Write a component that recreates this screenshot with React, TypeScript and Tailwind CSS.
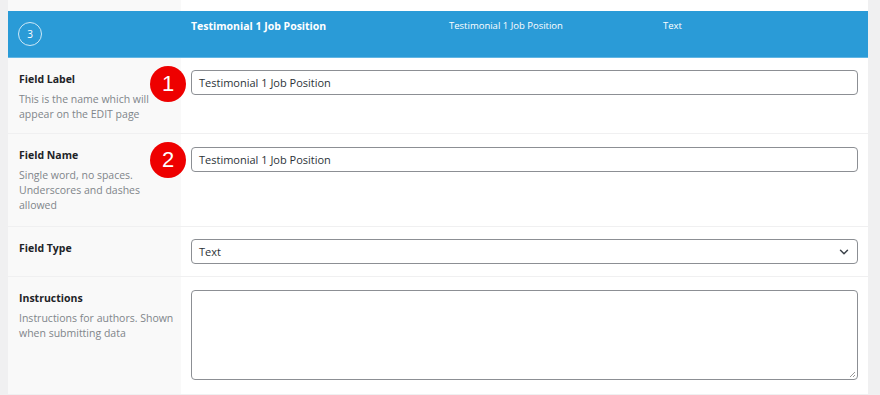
import { ChevronDown } from 'lucide-react';

const font = { fontFamily: '"Open Sans", "Noto Sans", sans-serif' };

interface RowProps {
  label: string;
  desc?: string[];
  badge?: string;
  height: string;
  children: React.ReactNode;
}

function Badge({ n }: { n: string }) {
  return (
    <div className="absolute left-[142px] top-[8px] w-[36px] h-[36px] rounded-full bg-[#ee0000] text-white flex items-center justify-center text-[22px] leading-none font-[Liberation_Sans] z-10">
      {n}
    </div>
  );
}

function Row({ label, desc, badge, height, children }: RowProps) {
  return (
    <div className={`relative flex border-b border-[#f0f0f1] ${height}`}>
      {badge && <Badge n={badge} />}
      <div className="w-[173px] shrink-0 bg-[#f9f9f9] pl-[11px] pt-[14px] whitespace-nowrap">
        <div className="text-[10.5px] font-bold text-[#1d2327] leading-[15px]">{label}</div>
        {desc && (
          <div className="mt-[5px] text-[10.5px] text-[#80858a] leading-[15px]">
            {desc.map((d) => (
              <div key={d}>{d}</div>
            ))}
          </div>
        )}
      </div>
      <div className="flex-1 px-[10px] pt-[12px]">{children}</div>
    </div>
  );
}

function TextInput({ value }: { value: string }) {
  return (
    <div className="h-[25px] border border-[#8c8f94] rounded-[4px] bg-white flex items-center px-[7px] pt-px text-[11px] text-[#2c3338]">
      {value}
    </div>
  );
}

export default function App() {
  return (
    <div className="w-[880px] h-[395px] overflow-hidden bg-[#f0f0f1] pl-[8px] pr-[12px]" style={font}>
      <div className="h-full bg-white flex flex-col">
        <div className="h-[11px] flex shrink-0">
          <div className="w-[173px] bg-[#f9f9f9]" />
        </div>
        <div className="h-[47px] shrink-0 bg-[#2a9bd7] border-b border-[#62b6e4] flex text-white">
          <div className="w-[173px] pl-[10px] pt-[11px]">
            <div className="w-[24px] h-[24px] rounded-full border border-[#cfe9f7] flex items-center justify-center text-[10px] leading-none">
              3
            </div>
          </div>
          <div className="w-[268px] pl-[10px] pt-[8px] text-[10.5px] font-bold">Testimonial 1 Job Position</div>
          <div className="w-[214px] pt-[8px] text-[9.5px]">Testimonial 1 Job Position</div>
          <div className="pt-[8px] text-[9.5px]">Text</div>
        </div>
        <Row
          label="Field Label"
          desc={['This is the name which will', 'appear on the EDIT page']}
          badge="1"
          height="h-[76px]"
        >
          <TextInput value="Testimonial 1 Job Position" />
        </Row>
        <Row
          label="Field Name"
          desc={['Single word, no spaces.', 'Underscores and dashes', 'allowed']}
          badge="2"
          height="h-[93px]"
        >
          <div className="pt-px">
            <TextInput value="Testimonial 1 Job Position" />
          </div>
        </Row>
        <Row label="Field Type" height="h-[50px]">
          <div className="h-[25px] border border-[#8c8f94] rounded-[4px] bg-white flex items-center justify-between pl-[7px] pr-[6px] pt-px text-[11px] text-[#2c3338]">
            <span>Text</span>
            <ChevronDown className="w-[14px] h-[14px] text-[#3c434a]" strokeWidth={2.5} />
          </div>
        </Row>
        <Row
          label="Instructions"
          desc={['Instructions for authors. Shown', 'when submitting data']}
          height="flex-1"
        >
          <div className="pt-px">
            <div className="h-[90px] border border-[#8c8f94] rounded-[4px] bg-white relative">
              <svg className="absolute right-[1px] bottom-[1px]" width="8" height="8" viewBox="0 0 8 8">
                <path d="M7 2 L2 7 M7 5 L5 7" stroke="#9a9a9a" strokeWidth="1" />
              </svg>
            </div>
          </div>
        </Row>
      </div>
    </div>
  );
}
